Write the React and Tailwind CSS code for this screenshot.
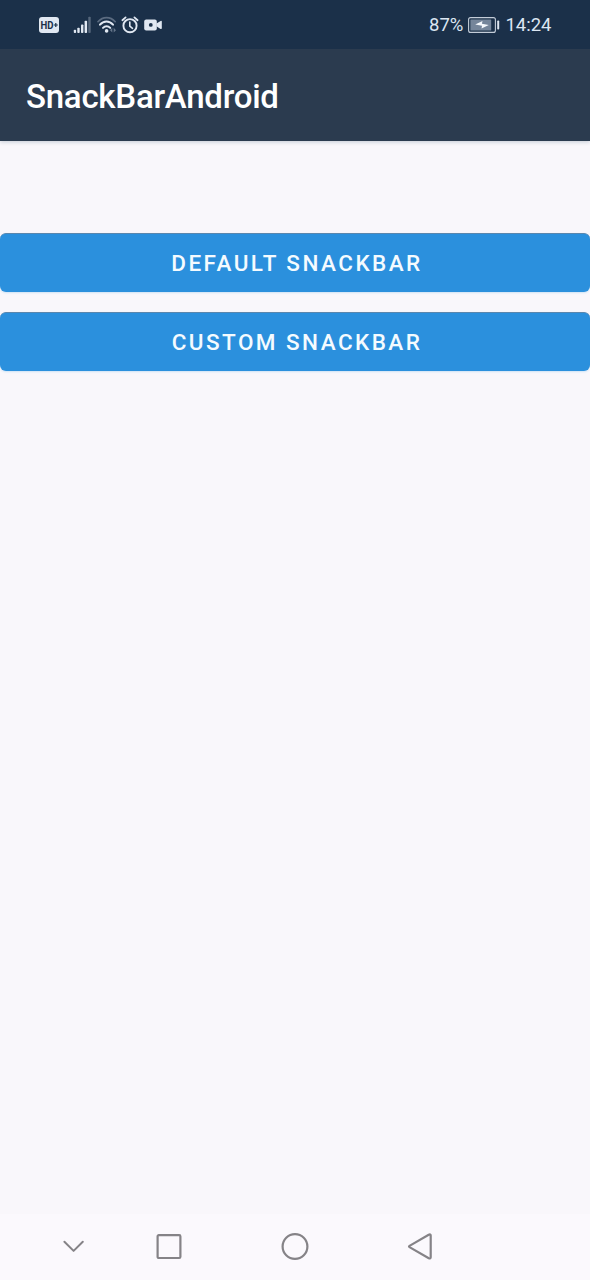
const HdBadge = () => (
  <div className="flex h-4 w-5 items-center justify-center rounded-[3px] bg-[#e1e8f2]">
    <svg width="20" height="16" viewBox="0 0 20 16">
      <text x="1.4" y="11.8" fontSize="10.5" fontWeight="700" fill="#1b3049" textLength="13" lengthAdjust="spacingAndGlyphs">HD</text>
      <path d="M14.8 8h4M16.8 6v4" stroke="#1b3049" strokeWidth="1.2" />
    </svg>
  </div>
);

const SignalIcon = () => (
  <svg width="18" height="18" viewBox="0 0 18 18" fill="#e1e8f2">
    <rect x="0.8" y="13.8" width="2.3" height="3.2" rx="0.8" />
    <rect x="4.3" y="11.8" width="2.4" height="5.2" rx="0.8" />
    <rect x="8" y="8.5" width="2.4" height="8.5" rx="0.8" />
    <rect x="11.6" y="4.8" width="2.5" height="12.2" rx="0.8" />
    <rect x="15.3" y="0.7" width="2.4" height="16.3" rx="0.8" opacity="0.3" />
  </svg>
);

const WifiIcon = () => (
  <svg width="20" height="18" viewBox="0 0 20 18" fill="none" strokeLinecap="round">
    <path d="M1 5.7C5.8 0.2 13.4 0.2 18.2 5.7" stroke="#5b6b80" strokeWidth="1.7" />
    <path d="M3 8.7C6.6 4.4 12.4 4.4 16 8.7" stroke="#e1e8f2" strokeWidth="2" />
    <path d="M6 11.9C8.2 9.6 11 9.6 13.2 11.9" stroke="#e1e8f2" strokeWidth="2" />
    <circle cx="9.6" cy="14.9" r="1.8" fill="#e1e8f2" />
    <path d="M15.3 11.8 13 14.2l2.3 2.4zM16.7 11.8l2.3 2.4-2.3 2.4z" fill="#65758a" />
  </svg>
);

const AlarmIcon = () => (
  <svg width="18" height="18" viewBox="0 0 18 18" fill="none" stroke="#e1e8f2" strokeLinecap="round">
    <circle cx="9" cy="9.7" r="6.6" strokeWidth="1.9" />
    <path d="M1.4 4.2 4.6 1.4M16.6 4.2 13.4 1.4" strokeWidth="1.8" />
    <path d="M8.8 6.1v4l2.7 2.2" strokeWidth="1.6" />
  </svg>
);

const RecordIcon = () => (
  <svg width="18" height="12" viewBox="0 0 18 12">
    <rect x="0.2" y="0.4" width="12.6" height="11" rx="2" fill="#e1e8f2" />
    <path d="M12.4 4.6 16.6 1.9Q17.8 1.5 17.8 2.6V9.2Q17.8 10.3 16.6 9.9L12.4 7.2z" fill="#e1e8f2" />
    <circle cx="6.8" cy="5.9" r="1.9" fill="#1b3049" />
  </svg>
);

const BatteryIcon = () => (
  <svg width="32" height="16" viewBox="0 0 32 16">
    <rect x="0.6" y="0.6" width="26.8" height="14.8" rx="2" fill="none" stroke="#c3ccd8" strokeWidth="1.1" />
    <rect x="2.4" y="2.4" width="20.8" height="11.2" rx="0.5" fill="#75859a" />
    <path d="M7.2 7.5 14.5 4.1 13.9 6.7 20.8 7.9 13.5 11.4 14 8.8z" fill="#f5f8fc" />
    <rect x="29.2" y="3.5" width="2" height="9" rx="0.8" fill="#dce4ee" />
  </svg>
);

const StatusBar = () => (
  <div className="z-10 flex h-[49px] items-center justify-between bg-[#1b3049] pl-[39px] pr-[38.5px] text-[18.5px] text-[#dce6f2]">
    <div className="flex items-center">
      <HdBadge />
      <div className="ml-3.5"><SignalIcon /></div>
      <div className="ml-1.5"><WifiIcon /></div>
      <div className="ml-1"><AlarmIcon /></div>
      <div className="ml-[5px]"><RecordIcon /></div>
    </div>
    <div className="flex items-center">
      <span className="pt-0.5">87%</span>
      <div className="ml-[5px] mr-[5px]"><BatteryIcon /></div>
      <span className="pt-0.5">14:24</span>
    </div>
  </div>
);

const SnackButton = ({ label }) => (
  <button className="flex h-[59px] w-full items-center justify-center rounded-md border-t border-[#5a87ae] bg-[#2b90dd] pl-1 pt-0.5 text-[22.5px] font-medium tracking-[2.45px] text-[#f4fbff] shadow-[0_1px_2px_#cfe3f5]">
    {label}
  </button>
);

const NavBar = () => (
  <div className="flex h-[66px] items-center bg-[#fbf9fd] pl-[62px] text-[#858387]">
    <svg width="24" height="28" viewBox="0 0 24 28" fill="none" stroke="currentColor" strokeWidth="2" strokeLinecap="round" strokeLinejoin="round">
      <path d="m2.4 8.7 9.2 9.2 9.2-9.2" />
    </svg>
    <svg className="ml-[69px]" width="28" height="28" viewBox="0 0 28 28" fill="none" stroke="currentColor" strokeWidth="2.2">
      <rect x="2.6" y="2.2" width="22.8" height="22.8" rx="1.2" />
    </svg>
    <svg className="ml-[98px]" width="28" height="28" viewBox="0 0 28 28" fill="none" stroke="currentColor" strokeWidth="2.2">
      <circle cx="14" cy="13.5" r="12.4" />
    </svg>
    <svg className="ml-[97px]" width="28" height="28" viewBox="0 0 28 28" fill="none" stroke="currentColor" strokeWidth="2.2" strokeLinejoin="round">
      <path d="M3.5 12.9 22.7 1.7Q24.7 0.9 24.7 2.6V24.3Q24.7 26 22.8 25.2L3.5 14.1Q2.5 13.5 3.5 12.9Z" />
    </svg>
  </div>
);

const App = () => {
  const buttons = ['DEFAULT SNACKBAR', 'CUSTOM SNACKBAR'];

  return (
    <div className="flex h-[1280px] w-[590px] flex-col bg-[#f9f7fb] font-['Roboto',sans-serif]">
      <StatusBar />
      <header className="flex h-[92px] items-center bg-[#2b3b4f] pl-[26px] pt-1 shadow-[0_1px_4px_#c5cbd5]">
        <h1 className="text-[33px] font-medium tracking-[-0.25px] text-white">SnackBarAndroid</h1>
      </header>
      <main className="flex flex-1 flex-col gap-5 pt-[92px]">
        {buttons.map((label) => (
          <SnackButton key={label} label={label} />
        ))}
      </main>
      <NavBar />
    </div>
  );
};

export default App;
